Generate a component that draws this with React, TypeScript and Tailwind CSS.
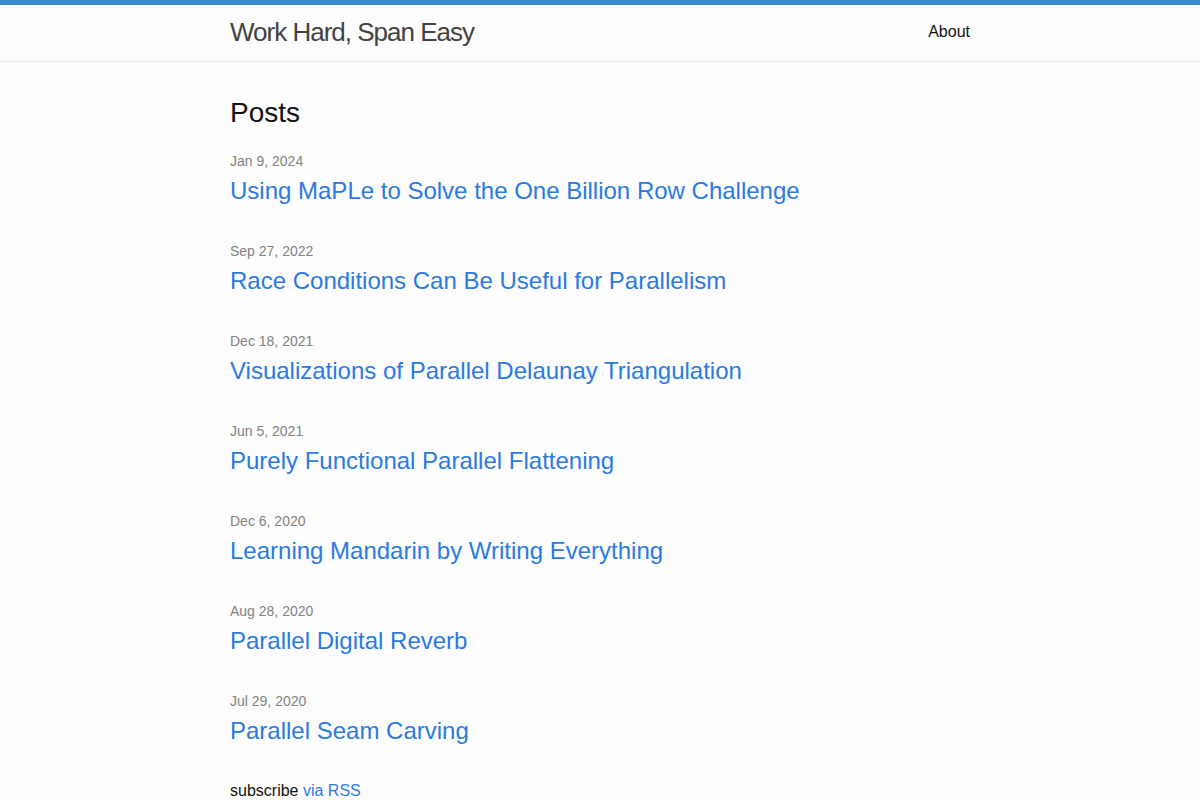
import React from "react";

interface Post {
  date: string;
  title: string;
}

const posts: Post[] = [
  { date: "Jan 9, 2024", title: "Using MaPLe to Solve the One Billion Row Challenge" },
  { date: "Sep 27, 2022", title: "Race Conditions Can Be Useful for Parallelism" },
  { date: "Dec 18, 2021", title: "Visualizations of Parallel Delaunay Triangulation" },
  { date: "Jun 5, 2021", title: "Purely Functional Parallel Flattening" },
  { date: "Dec 6, 2020", title: "Learning Mandarin by Writing Everything" },
  { date: "Aug 28, 2020", title: "Parallel Digital Reverb" },
  { date: "Jul 29, 2020", title: "Parallel Seam Carving" },
];

export default function App() {
  return (
    <div className="min-h-screen bg-[#fdfdfd] text-[#111] text-[16px] leading-[1.5] font-['Liberation_Sans',Helvetica,Arial,sans-serif]">
      <header className="border-t-[5px] border-[#3a8ccc] border-b border-b-[#e8e8e8] min-h-[62px]">
        <div className="max-w-[800px] mx-auto px-[30px] flex justify-between">
          <a href="#" className="text-[26px] font-light leading-[54px] tracking-[-1px] text-[#424242]">
            Work Hard, Span Easy
          </a>
          <nav>
            <a href="#" className="leading-[54px] text-[#111]">
              About
            </a>
          </nav>
        </div>
      </header>

      <main className="py-[30px]">
        <div className="max-w-[800px] mx-auto px-[30px]">
          <h2 className="text-[28px] leading-[1.5] mb-[15px]">Posts</h2>
          <ul className="mb-[15px]">
            {posts.map((p) => (
              <li key={p.title} className="mb-[30px]">
                <span className="text-[14px] text-[#828282]">{p.date}</span>
                <h3 className="text-[24px] leading-[1.5] mb-[15px]">
                  <a href="#" className="text-[#2a7ae2]">
                    {p.title}
                  </a>
                </h3>
              </li>
            ))}
          </ul>
          <p>
            subscribe{" "}
            <a href="#" className="text-[#2a7ae2]">
              via RSS
            </a>
          </p>
        </div>
      </main>
    </div>
  );
}
